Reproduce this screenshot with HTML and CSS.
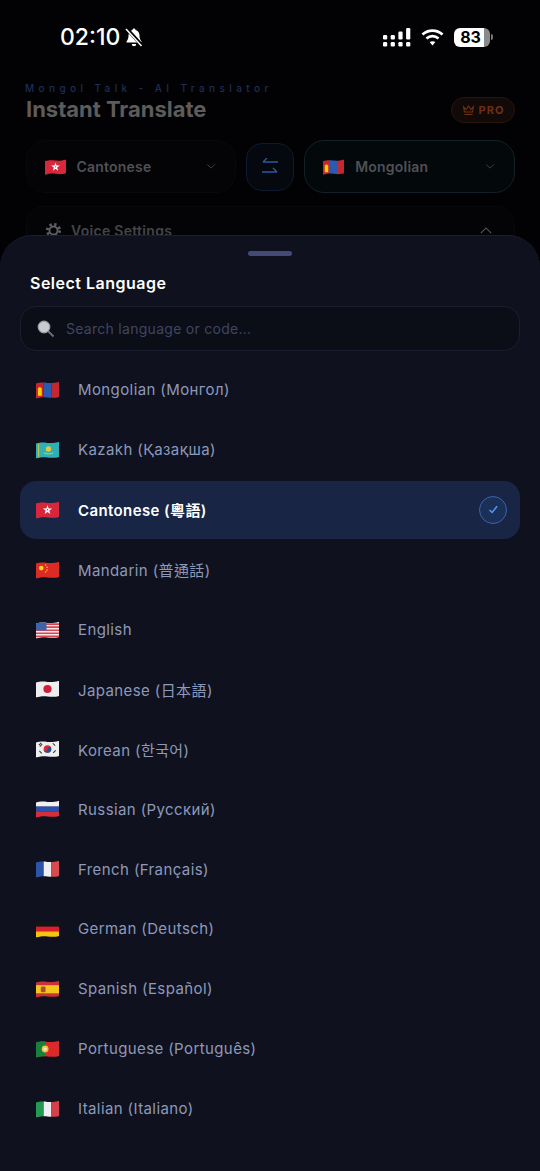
FILE: index.html
```html
<!DOCTYPE html>
<html lang="en">
<head>
<meta charset="utf-8">
<title>Select Language</title>
<link rel="stylesheet" href="styles.css">
</head>
<body>
<svg class="defs" width="0" height="0" aria-hidden="true">
  <defs>
    <clipPath id="wave"><path d="M0 2.200C5 .8 8 1.200 12 1.600S19 1.800 24 .3V16.200C19 17.600 16 17.200 12 16.700S5 16.600 0 18Z"/></clipPath>
    <symbol id="f-mn" viewBox="0 0 24 18"><g clip-path="url(#wave)"><rect width="8" height="18" fill="#c4272f"/><rect x="8" width="8" height="18" fill="#2a5bb0"/><rect x="16" width="8" height="18" fill="#c4272f"/><path d="M3 6h2v1h1v8H2V7h1z" fill="#f9cf02"/></g></symbol>
    <symbol id="f-kz" viewBox="0 0 24 18"><g clip-path="url(#wave)"><rect width="24" height="18" fill="#2fb0b5"/><circle cx="13" cy="8" r="2.800" fill="#e3c93a"/><path d="M8 12q5 2.500 10 0" stroke="#e3c93a" fill="none"/><rect x="2" y="3" width="1.300" height="13" fill="#c9c04a"/></g></symbol>
    <symbol id="f-hk" viewBox="0 0 24 18"><g clip-path="url(#wave)"><rect width="24" height="18" fill="#d8263a"/><path d="M12 3.800L13.200 7.400 17 7.400 13.900 9.600 15 13.200 12 11 9 13.200 10.100 9.600 7 7.400 10.800 7.400Z" fill="#fff"/><circle cx="12" cy="8.800" r=".8" fill="#d8263a"/></g></symbol>
    <symbol id="f-cn" viewBox="0 0 24 18"><g clip-path="url(#wave)"><rect width="24" height="18" fill="#dc2b25"/><circle cx="5.500" cy="7" r="2.400" fill="#f9d423"/><circle cx="10" cy="3.800" r=".8" fill="#f9d423"/><circle cx="11.500" cy="6.200" r=".8" fill="#f9d423"/><circle cx="11.500" cy="9" r=".8" fill="#f9d423"/><circle cx="10" cy="11" r=".8" fill="#f9d423"/></g></symbol>
    <symbol id="f-us" viewBox="0 0 24 18"><g clip-path="url(#wave)"><rect width="24" height="18" fill="#f3e9ea"/><path d="M0 2h24v1.700H0zM0 5.200h24v1.700H0zM0 8.400h24v1.700H0zM0 11.600h24v1.700H0zM0 14.800h24v1.700H0z" fill="#d9464f"/><rect width="11" height="9.500" fill="#3d63ab"/></g></symbol>
    <symbol id="f-jp" viewBox="0 0 24 18"><g clip-path="url(#wave)"><rect width="24" height="18" fill="#eeeeee"/><circle cx="12" cy="9" r="4.300" fill="#d11f3a"/></g></symbol>
    <symbol id="f-kr" viewBox="0 0 24 18"><g clip-path="url(#wave)"><rect width="24" height="18" fill="#eeeeee"/><circle cx="12" cy="9" r="4" fill="#d92b3a"/><path d="M8 9a4 4 0 0 0 8 0 2 2 0 0 0-4 0 2 2 0 0 1-4 0z" fill="#27508f"/><path d="M3 5l2.500-2.500M4 6.500L6.500 4M17.500 3l2.500 2.500M18 13l2.500-2.500M3.500 11l2.500 2.500" stroke="#333" stroke-width="1.100"/></g></symbol>
    <symbol id="f-ru" viewBox="0 0 24 18"><g clip-path="url(#wave)"><rect width="24" height="6.500" fill="#f0f0f2"/><rect y="6.500" width="24" height="5" fill="#2c4fb0"/><rect y="11.500" width="24" height="6.500" fill="#d62f3c"/></g></symbol>
    <symbol id="f-fr" viewBox="0 0 24 18"><g clip-path="url(#wave)"><rect width="8" height="18" fill="#2a55a8"/><rect x="8" width="8" height="18" fill="#f0f0f2"/><rect x="16" width="8" height="18" fill="#d94a4f"/></g></symbol>
    <symbol id="f-de" viewBox="0 0 24 18"><g clip-path="url(#wave)"><rect width="24" height="6.500" fill="#141414"/><rect y="6.500" width="24" height="5" fill="#d9202c"/><rect y="11.500" width="24" height="6.500" fill="#f6c40f"/></g></symbol>
    <symbol id="f-es" viewBox="0 0 24 18"><g clip-path="url(#wave)"><rect width="24" height="18" fill="#c8303a"/><rect y="5" width="24" height="8.500" fill="#f5c51c"/><rect x="5" y="6.500" width="5" height="6" rx="1.500" fill="#a8522a"/></g></symbol>
    <symbol id="f-pt" viewBox="0 0 24 18"><g clip-path="url(#wave)"><rect width="24" height="18" fill="#dc2a2a"/><rect width="9.500" height="18" fill="#16813a"/><circle cx="9.500" cy="9" r="3.600" fill="#eac23c"/><circle cx="9.500" cy="9" r="1.800" fill="#e7e7e7"/></g></symbol>
    <symbol id="f-it" viewBox="0 0 24 18"><g clip-path="url(#wave)"><rect width="8" height="18" fill="#229a52"/><rect x="8" width="8" height="18" fill="#f0f0f2"/><rect x="16" width="8" height="18" fill="#d5404a"/></g></symbol>
  </defs>
</svg>

<div class="app">
  <div class="status">
    <div class="status-left">
      <span class="time">02:10</span>
      <svg class="bell" viewBox="0 0 20 20"><path d="M10 1.500c.9 0 1.500.6 1.500 1.400 2.700.7 4 2.900 4 5.600 0 3 .8 4.500 2 6v1H2.500v-1c1.200-1.500 2-3 2-6 0-2.700 1.300-4.900 4-5.600 0-.8.600-1.400 1.500-1.400z" fill="#fff"/><path d="M7.800 17h4.400a2.200 2.200 0 0 1-4.400 0z" fill="#fff"/><path d="M2.500 1.500l15.500 17" stroke="#000" stroke-width="3.400"/><path d="M2 2l15.500 17" stroke="#fff" stroke-width="1.500"/></svg>
    </div>
    <div class="status-right">
      <svg class="signal" viewBox="0 0 28 19" fill="#fff"><rect x="0" y="7" width="4.200" height="4.500" rx="1.200"/><rect x="0" y="14" width="4.200" height="4.500" rx="1.200"/><rect x="7.700" y="7" width="4.200" height="4.500" rx="1.200"/><rect x="7.700" y="14" width="4.200" height="4.500" rx="1.200"/><rect x="15.400" y="3.500" width="4.200" height="8" rx="1.200"/><rect x="15.400" y="14" width="4.200" height="4.500" rx="1.200"/><rect x="23.100" y="0" width="4.200" height="11.500" rx="1.200"/><rect x="23.100" y="14" width="4.200" height="4.500" rx="1.200"/></svg>
      <svg class="wifi" viewBox="0 0 24 18" fill="none" stroke="#fff" stroke-width="2.800"><path d="M1.500 6.500c6-5.500 15-5.500 21 0"/><path d="M5.700 10.600c3.700-3.300 8.900-3.300 12.600 0"/><path d="M12 17.800l-3-3.500c1.800-1.300 4.200-1.300 6 0z" fill="#fff" stroke="none"/></svg>
      <div class="battery"><div class="battery-body"><span class="battery-num">83</span></div><span class="battery-tip"></span></div>
    </div>
  </div>

  <header class="head">
    <div class="brand">
      <div class="eyebrow">Mongol Talk - AI Translator</div>
      <h1 class="title">Instant Translate</h1>
    </div>
    <div class="pro">
      <svg class="crown" viewBox="0 0 16 14" fill="none" stroke="#6e3014" stroke-width="1.400"><path d="M2 3l3 3.500L8 2l3 4.500L14 3l-1 6.500H3z"/><path d="M3 12.500h10"/></svg>
      <span>PRO</span>
    </div>
  </header>

  <div class="pickers">
    <div class="picker">
      <svg class="flag-sm"><use href="#f-hk"/></svg>
      <span class="picker-name">Cantonese</span>
      <svg class="chev" viewBox="0 0 12 8" fill="none" stroke="#3d3f45" stroke-width="1.200"><path d="M1.500 1.500L6 6l4.500-4.500"/></svg>
    </div>
    <div class="swap">
      <svg viewBox="0 0 18 18" fill="none" stroke="#2c5a9a" stroke-width="1.300"><path d="M17 4H2M6 0l-4 4M1 14h15M12 10l4 4"/></svg>
    </div>
    <div class="picker picker-target">
      <svg class="flag-sm"><use href="#f-mn"/></svg>
      <span class="picker-name">Mongolian</span>
      <svg class="chev" viewBox="0 0 12 8" fill="none" stroke="#3d3f45" stroke-width="1.200"><path d="M1.500 1.500L6 6l4.500-4.500"/></svg>
    </div>
  </div>

  <div class="voice">
    <svg class="gear" viewBox="0 0 18 18" fill="none" stroke="#5c5e63"><circle cx="9" cy="9" r="6.500" stroke-width="3" stroke-dasharray="2.500 2.600"/><circle cx="9" cy="9" r="4.300" stroke-width="2"/></svg>
    <span class="voice-label">Voice Settings</span>
    <svg class="chev-up" viewBox="0 0 14 8" fill="none" stroke="#55575c" stroke-width="1.300"><path d="M1 7l6-6 6 6"/></svg>
  </div>

  <section class="sheet">
    <div class="grip"></div>
    <h2 class="sheet-title">Select Language</h2>
    <div class="search">
      <svg class="lens" viewBox="0 0 18 18"><path d="M10.500 10.500l6 6" stroke="#6d6f78" stroke-width="2"/><circle cx="7" cy="7" r="5.800" fill="#c9cbd0" stroke="#9a9ca4" stroke-width="1.200"/></svg>
      <span class="placeholder">Search language or code...</span>
    </div>
    <ul class="list">
      <li class="row"><svg class="flag"><use href="#f-mn"/></svg><span class="name">Mongolian (Монгол)</span></li>
      <li class="row"><svg class="flag"><use href="#f-kz"/></svg><span class="name">Kazakh (Қазақша)</span></li>
      <li class="row row-active"><svg class="flag"><use href="#f-hk"/></svg><span class="name">Cantonese (粵語)</span>
        <span class="check"><svg viewBox="0 0 12 10" fill="none" stroke="#5b93ef" stroke-width="1.700"><path d="M1.500 5.500l3 2.800 5.500-7"/></svg></span></li>
      <li class="row"><svg class="flag"><use href="#f-cn"/></svg><span class="name">Mandarin (普通話)</span></li>
      <li class="row"><svg class="flag"><use href="#f-us"/></svg><span class="name">English</span></li>
      <li class="row"><svg class="flag"><use href="#f-jp"/></svg><span class="name">Japanese (日本語)</span></li>
      <li class="row"><svg class="flag"><use href="#f-kr"/></svg><span class="name">Korean (한국어)</span></li>
      <li class="row"><svg class="flag"><use href="#f-ru"/></svg><span class="name">Russian (Русский)</span></li>
      <li class="row"><svg class="flag"><use href="#f-fr"/></svg><span class="name">French (Français)</span></li>
      <li class="row"><svg class="flag"><use href="#f-de"/></svg><span class="name">German (Deutsch)</span></li>
      <li class="row"><svg class="flag"><use href="#f-es"/></svg><span class="name">Spanish (Español)</span></li>
      <li class="row"><svg class="flag"><use href="#f-pt"/></svg><span class="name">Portuguese (Português)</span></li>
      <li class="row"><svg class="flag"><use href="#f-it"/></svg><span class="name">Italian (Italiano)</span></li>
    </ul>
  </section>
</div>
</body>
</html>
```
FILE: styles.css
```css
* { box-sizing: border-box; }
html, body { margin: 0; padding: 0; background: #000; }
body { font-family: Inter, "Noto Sans CJK TC", "Noto Sans CJK KR", sans-serif; }
.defs { position: absolute; }
.app { position: relative; width: 540px; height: 1171px; overflow: hidden; background: #020204; }

.status { height: 75px; display: flex; justify-content: space-between; padding: 22px 47px 0 60px; align-items: flex-start; }
.status-left { display: flex; align-items: center; gap: 4px; height: 30px; }
.time { color: #fff; font-size: 23px; font-weight: 500; line-height: 30px; font-family: Inter, sans-serif; }
.bell { width: 20px; height: 20px; }
.status-right { display: flex; align-items: center; height: 30px; }
.signal { width: 28px; height: 19px; }
.wifi { width: 23px; height: 18px; margin-left: 10px; }
.battery { display: flex; align-items: center; margin-left: 10px; }
.battery-body { width: 36px; height: 19px; border-radius: 6px; background: linear-gradient(90deg, #fff 0, #fff 82%, #8a8a8a 82%); display: flex; align-items: center; justify-content: center; padding-right: 3px; }
.battery-num { color: #000; font-size: 16px; font-weight: 700; line-height: 19px; }
.battery-tip { width: 2px; height: 6px; margin-left: 1px; background: #777; border-radius: 0 2px 2px 0; }

.head { display: flex; justify-content: space-between; padding: 7px 25px 0 25px; height: 65px; }
.eyebrow { font-size: 10px; line-height: 12px; letter-spacing: 4.4px; color: #1d2e58; font-weight: 500; white-space: nowrap; }
.title { margin: 2px 0 0 1px; font-size: 22px; line-height: 27px; font-weight: 700; color: #5c5c5c; letter-spacing: -.02px; }
.pro { align-self: flex-start; margin-top: 15px; width: 64px; height: 26px; border: 1px solid #2a140c; border-radius: 13px; background: #120a08; display: flex; align-items: center; justify-content: center; gap: 4px; color: #6e3014; font-size: 11px; font-weight: 700; letter-spacing: 1px; }
.crown { width: 13px; height: 12px; }

.pickers { display: flex; align-items: center; gap: 10px; padding: 0 25px 0 25.5px; height: 53px; }
.picker { flex: 1; height: 53px; display: flex; align-items: center; padding: 0 19px 0 18px; border-radius: 20px; background: #040406; border: 1px solid #08090d; }
.picker-target { border-color: #132126; background: #03080a; }
.flag-sm { width: 21px; height: 16px; }
.picker-name { flex: 1; margin-left: 11px; color: #4f5156; font-size: 14px; font-weight: 600; letter-spacing: .2px; }
.chev { width: 10px; height: 7px; }
.swap { width: 48px; height: 48px; flex: none; border-radius: 16px; border: 1px solid #0e1a30; background: #05080f; display: flex; align-items: center; justify-content: center; }
.swap svg { width: 18px; height: 18px; }

.voice { margin: 13px 25px 0 26px; height: 60px; padding: 0 22px 12px 18px; border: 1px solid #08090d; border-radius: 18px; background: #040406; display: flex; align-items: center; }
.gear { width: 17px; height: 17px; margin-right: 9px; }
.voice-label { flex: 1; color: #43454a; font-size: 14px; font-weight: 600; letter-spacing: .3px; }
.chev-up { width: 12px; height: 7px; }

.sheet { position: absolute; left: 0; right: 0; top: 235px; bottom: 0; background: #0f121e; border-radius: 32px 32px 0 0; border-top: 1px solid #1a1d33; padding: 0 20px; }
.grip { width: 44px; height: 5px; margin: 15px auto 0; border-radius: 3px; background: #444a78; }
.sheet-title { margin: 15px 0 0 10px; color: #fff; font-size: 16px; line-height: 24px; font-weight: 600; letter-spacing: .5px; }
.search { margin-top: 11px; height: 45px; display: flex; align-items: center; padding: 0 16px; border: 1px solid #1b1e2e; border-radius: 16px; background: #0b0d17; }
.lens { width: 18px; height: 18px; }
.placeholder { margin-left: 11px; color: #414560; font-size: 14px; letter-spacing: .28px; }

.list { list-style: none; margin: 10px 0 0; padding: 0; display: flex; flex-direction: column; gap: 2px; }
.row { height: 57.9px; display: flex; align-items: center; padding: 0 13px 0 16px; border-radius: 16px; }
.row-active { background: #182545; }
.flag { width: 23px; height: 18px; flex: none; }
.name { flex: 1; margin-left: 19px; color: #8d99ba; font-size: 15px; font-weight: 400; letter-spacing: .4px; }
.row-active .name { color: #fff; font-weight: 600; }
.check { width: 28px; height: 28px; border-radius: 50%; border: 1px solid #3b62a8; background: #1b3058; display: flex; align-items: center; justify-content: center; }
.check svg { width: 11px; height: 9px; }
```
